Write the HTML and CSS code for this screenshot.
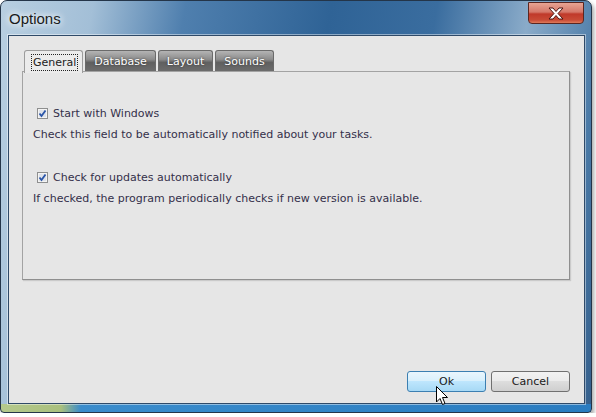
FILE: index.html
```html
<!DOCTYPE html>
<html lang="en">
<head>
  <meta charset="UTF-8">
  <title>Options</title>
  <link rel="stylesheet" href="styles.css">
</head>
<body>
  <div class="window">
    <div class="titlebar">
      <span class="title">Options</span>
      <div class="close">
        <svg width="22" height="13" viewBox="0 0 22 13">
          <path d="M4 1 L8 1 L11 4.5 L14 1 L18 1 L13 6.5 L18 12 L14 12 L11 8.5 L8 12 L4 12 L9 6.5 Z" fill="#fff" stroke="#4a1410" stroke-width="1"/>
        </svg>
      </div>
    </div>
    <div class="client">
      <div class="tabs">
        <div class="tab active"><span class="focus">General</span></div>
        <div class="tab">Database</div>
        <div class="tab">Layout</div>
        <div class="tab">Sounds</div>
      </div>
      <div class="pane">
        <label class="check">
          <svg width="11" height="11" viewBox="0 0 11 11">
            <rect x="0.5" y="0.5" width="10" height="10" fill="#f4f4f4" stroke="#8e8f8f"/>
            <rect x="2" y="2" width="7" height="7" fill="#dfe3ea"/>
            <path d="M2.5 5.5 L4.5 8 L8.5 2.5" fill="none" stroke="#2a55a8" stroke-width="1.8"/>
          </svg>
          Start with Windows
        </label>
        <p class="hint">Check this field to be automatically notified about your tasks.</p>
        <label class="check second">
          <svg width="11" height="11" viewBox="0 0 11 11">
            <rect x="0.5" y="0.5" width="10" height="10" fill="#f4f4f4" stroke="#8e8f8f"/>
            <rect x="2" y="2" width="7" height="7" fill="#dfe3ea"/>
            <path d="M2.5 5.5 L4.5 8 L8.5 2.5" fill="none" stroke="#2a55a8" stroke-width="1.8"/>
          </svg>
          Check for updates automatically
        </label>
        <p class="hint">If checked, the program periodically checks if new version is available.</p>
      </div>
      <div class="buttons">
        <button class="btn hover">Ok</button>
        <button class="btn">Cancel</button>
      </div>
    </div>
    <svg class="cursor" width="13" height="20" viewBox="0 0 13 20">
      <path d="M0.5 0.5 L0.5 16 L4 12.5 L6.5 18.5 L9 17.5 L6.5 11.5 L11.5 11.5 Z" fill="#fff" stroke="#000" stroke-width="1"/>
    </svg>
  </div>
</body>
</html>
```

FILE: styles.css
```css
body {
  margin: 0;
  background-color: #ffffff;
  font-family: 'DejaVu Sans', Verdana, sans-serif;
}

.window {
  position: relative;
  width: 577px;
  height: 411px;
  padding: 0 6px 0 7px;
  display: flex;
  flex-direction: column;
  border: 1px solid #243549;
  border-radius: 7px 7px 4px 4px;
  background:
    linear-gradient(90deg, #b5c98c 0, #a9c07e 60px, #3a8ccc 80px, #2a7cc0 100%) left bottom / 100% 8px no-repeat,
    linear-gradient(100deg, #b8cfe1 0%, #a3bfd7 14%, #4f7fae 28%, #2f6396 50%, #3a6d9f 66%, #8aabc9 80%, #4a7aa7 92%, #345f8c 100%);
  box-shadow: 2px 3px 4px rgba(0,0,0,0.35);
}

.titlebar {
  height: 34px;
  display: flex;
  justify-content: space-between;
}

.title {
  font-family: 'Liberation Sans', Arial, sans-serif;
  font-size: 15px;
  color: #1a1a1a;
  margin-top: 9px;
  margin-left: 1px;
  text-shadow: 0 0 8px #fff, 0 0 6px #fff;
}

.close {
  width: 54px;
  height: 20px;
  margin-top: 1px;
  margin-right: 1px;
  display: flex;
  align-items: center;
  justify-content: center;
  border: 1px solid #5b2620;
  border-radius: 0 0 4px 4px;
  background: linear-gradient(#e8a493 0%, #d5786a 45%, #c0392a 55%, #c84b36 85%, #e07a5a 100%);
}

.client {
  flex: 1;
  margin-bottom: 8px;
  display: flex;
  flex-direction: column;
  background-color: #e6e6e6;
  border: 1px solid #2f4a68;
  box-shadow: 0 0 0 1px rgba(255,255,255,0.45);
  padding: 14px 14px 11px 13px;
  color: #34304a;
  font-size: 11px;
}

.tabs {
  display: flex;
  gap: 2px;
  padding-left: 2px;
  height: 22px;
}

.tab {
  height: 21px;
  padding: 0 8px;
  display: flex;
  align-items: center;
  border: 1px solid #6a6a6a;
  border-bottom: none;
  border-radius: 3px 3px 0 0;
  background: linear-gradient(#b4b4b4 0%, #8c8c8c 40%, #606060 55%, #6d6d6d 100%);
  color: #ffffff;
  font-size: 11px;
  text-shadow: 0 0 2px #333;
}

.tab.active {
  height: 22px;
  position: relative;
  z-index: 1;
  padding: 0 4px 0 6px;
  background: #ebebeb;
  border-color: #9c9c9c;
  color: #222;
  text-shadow: none;
}

.focus {
  border: 1px dotted #222;
  padding: 1px 1px;
}

.pane {
  height: 176px;
  margin-top: -1px;
  padding: 31px 10px 0;
  border: 1px solid #a3a3a3;
  border-right-color: #8f8f8f;
  border-bottom-color: #8f8f8f;
  box-shadow: 1px 1px 1px rgba(0,0,0,0.12);
}

.check {
  display: flex;
  align-items: center;
  gap: 5px;
  height: 20px;
  padding-left: 4px;
}

.check.second {
  margin-top: 22px;
}

.hint {
  margin: 2px 0 0;
  line-height: 20px;
}

.buttons {
  margin-top: auto;
  display: flex;
  justify-content: flex-end;
  gap: 5px;
}

.btn {
  width: 79px;
  height: 21px;
  padding: 0;
  font-family: 'DejaVu Sans', Verdana, sans-serif;
  font-size: 11px;
  color: #1a1a1a;
  border: 1px solid #707070;
  border-radius: 3px;
  background: linear-gradient(#f2f2f2 0%, #ebebeb 45%, #dddddd 50%, #cfcfcf 100%);
}

.btn.hover {
  border-color: #3c7fb1;
  background: linear-gradient(#eaf6fd 0%, #d9f0fc 45%, #bee6fd 50%, #a7d9f5 100%);
}

.cursor {
  position: absolute;
  left: 435px;
  top: 385px;
}
```
